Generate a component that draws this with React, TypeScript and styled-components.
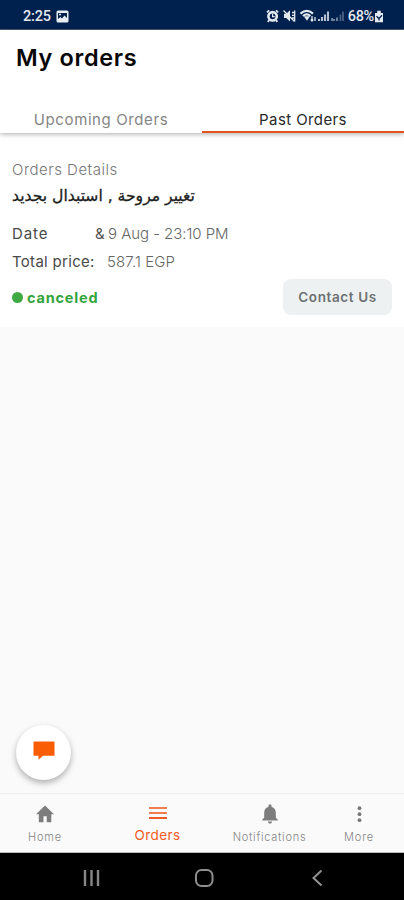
import React from "react";
import styled, { createGlobalStyle } from "styled-components";

const GlobalStyle = createGlobalStyle`
  * { box-sizing: border-box; }
  body { margin: 0; background: #fafafa; font-family: Inter, "Open Sans", sans-serif; }
  button { font: inherit; border: 0; padding: 0; background: none; }
  svg { display: block; flex: none; }
`;

const Screen = styled.div`
  width: 404px;
  height: 900px;
  display: flex;
  flex-direction: column;
  overflow: hidden;
  background: #fafafa;
`;

const StatusBar = styled.div`
  height: 30px;
  flex: none;
  display: flex;
  align-items: center;
  justify-content: space-between;
  padding: 3px 20px 0 23px;
  background: #00204d;
  border-bottom: 1px solid #4c5d7b;
  color: #e4e9f0;
  font-family: Roboto, sans-serif;
  font-size: 14.5px;
`;

const StatusGroup = styled.div`
  display: flex;
  align-items: center;
`;

const Clock = styled.span`
  margin-right: 5px;
  font-weight: 500;
  letter-spacing: -0.15px;
`;

const Percent = styled.span`
  margin-left: 3px;
  font-weight: 500;
  letter-spacing: -0.3px;
`;

const Header = styled.header`
  height: 103px;
  flex: none;
  display: flex;
  flex-direction: column;
  justify-content: space-between;
  background: #fff;
  box-shadow: 0 1px 5px rgba(0, 0, 0, 0.34);
  z-index: 1;
`;

const Title = styled.h1`
  margin: 12px 0 0 16px;
  font-size: 23.5px;
  line-height: 32px;
  font-weight: 600;
  letter-spacing: 0.65px;
  color: #080808;
`;

const Tabs = styled.nav`
  display: grid;
  grid-template-columns: 1fr 1fr;
`;

const Tab = styled.button<{ $active?: boolean }>`
  height: 30px;
  padding-top: 4px;
  border-bottom: 2px solid ${(p) => (p.$active ? "#e4521f" : "transparent")};
  color: ${(p) => (p.$active ? "#292929" : "#858585")};
  font-size: 15px;
  letter-spacing: ${(p) => (p.$active ? "0.4px" : "0.6px")};
`;

const Order = styled.section`
  height: 194px;
  flex: none;
  display: flex;
  flex-direction: column;
  padding: 25px 12px 0;
  background: #fff;
`;

const Caption = styled.div`
  height: 24px;
  line-height: 24px;
  font-size: 15px;
  font-weight: 300;
  letter-spacing: 0.5px;
  color: #777;
`;

const Service = styled.div`
  height: 30px;
  margin-bottom: 8px;
  line-height: 29px;
  font-family: "DejaVu Sans", sans-serif;
  font-size: 15.6px;
  color: #1c1c1c;
  -webkit-text-stroke: 0.3px #1c1c1c;
  white-space: nowrap;
`;

const Row = styled.div`
  height: 28px;
  line-height: 28px;
  display: flex;
  font-size: 15px;
`;

const Label = styled.span<{ $width: number; $spacing: number }>`
  width: ${(p) => p.$width}px;
  letter-spacing: ${(p) => p.$spacing}px;
  color: #494949;
  white-space: nowrap;
`;

const Ampersand = styled.span`
  width: 13px;
  font-size: 15px;
  color: #555;
`;

const Value = styled.span<{ $spacing: number }>`
  letter-spacing: ${(p) => p.$spacing}px;
  font-weight: 300;
  color: #666;
`;

const OrderFooter = styled.div`
  display: flex;
  align-items: center;
  justify-content: space-between;
  margin-top: 3px;
`;

const Status = styled.div`
  display: flex;
  align-items: center;
  gap: 4px;
  font-size: 14.5px;
  font-weight: 700;
  letter-spacing: 0.8px;
  color: #32a43b;
`;

const Dot = styled.span`
  width: 11px;
  height: 11px;
  border-radius: 50%;
  background: #3eaa43;
`;

const ContactButton = styled.button`
  width: 109px;
  height: 36px;
  border-radius: 8px;
  background: #edf1f2;
  color: #6d7173;
  font-size: 13.5px;
  font-weight: 600;
  letter-spacing: 0.6px;
`;

const Content = styled.main`
  flex: 1;
  display: flex;
  align-items: flex-end;
  padding: 0 0 13px 16px;
`;

const ChatButton = styled.button`
  width: 55px;
  height: 55px;
  display: flex;
  align-items: center;
  justify-content: center;
  padding-bottom: 3px;
  border-radius: 50%;
  background: #fff;
  box-shadow: 0 3px 6px rgba(0, 0, 0, 0.3);
`;

const BottomNav = styled.nav`
  height: 60px;
  flex: none;
  display: grid;
  grid-template-columns: 90px 135px 89px 90px;
  border-top: 1px solid #ededed;
  border-bottom: 1px solid #bbb;
  background: #fafafa;
`;

const NavItem = styled.button<{ $active?: boolean; $spacing: number }>`
  display: flex;
  flex-direction: column;
  align-items: center;
  justify-content: flex-start;
  padding-top: ${(p) => (p.$active ? 9 : 10)}px;
  gap: ${(p) => (p.$active ? "3px" : "4px")};
  color: ${(p) => (p.$active ? "#f15a20" : "#858585")};
  font-size: ${(p) => (p.$active ? 13.5 : 11)}px;
  font-weight: ${(p) => (p.$active ? 400 : 300)};
  line-height: 18px;
  letter-spacing: ${(p) => p.$spacing}px;
  white-space: nowrap;
`;

const SystemBar = styled.div`
  height: 47px;
  flex: none;
  display: grid;
  grid-template-columns: repeat(3, 113px);
  align-items: center;
  justify-items: center;
  padding: 3px 0 0 34px;
  background: #000;
`;

const PictureIcon = () => (
  <svg width="13" height="13" viewBox="0 0 13 13">
    <rect x="0.5" y="0.5" width="12" height="12" rx="1.5" fill="#e8edf3" />
    <path d="M2 3h9v5L8.5 5.5 6 8.5 4.5 7 2 9z" fill="#00204d" />
    <circle cx="4" cy="4.5" r="1" fill="#e8edf3" />
  </svg>
);

const StatusIcons = () => (
  <svg width="79" height="14" viewBox="0 0 79 14" fill="none" stroke="#e4e9f0">
    <circle cx="6.6" cy="7.3" r="4.2" strokeWidth="2.6" />
    <path d="M1 3.4 3.2 1.3M10 1.3l2.2 2.1M3.2 11.2l-1.4 1.6M10 11.2l1.4 1.6" strokeWidth="1.8" />
    <path d="M6.6 4.7v3h2.1" strokeWidth="1.2" />
    <path d="M18 4.8h2.2L24 1.3v11.2L20.2 9H18z" fill="#e4e9f0" stroke="none" />
    <path d="m17.5 1.5 11 11M26 3.5h3M26 6.3h3M26 9h3M28.7 1.5v11" strokeWidth="1.3" />
    <path d="M34.5 4.7c4-3.5 8.5-3.5 12.5 0M37 7c2.4-2.1 5-2.1 7.4 0" strokeWidth="2.2" />
    <path d="m37.8 7.3 3.2 4.5 3-4.5z" fill="#e4e9f0" stroke="none" />
    <path d="M46 7v5M44.7 10.5 46 12l1.2-1.5M49 12V8" strokeWidth="1.3" />
    <path d="M53 12v-2M56 12V8M59 12V5.5M62 12V2.5" strokeWidth="2.1" opacity=".8" />
    <path d="M66 9v3M68 12v-2M71 12V8.5" strokeWidth="1.5" opacity=".65" />
    <path d="M74.5 12V5.5M77 12V2.5" strokeWidth="1.8" opacity=".32" />
  </svg>
);

const BatteryIcon = () => (
  <svg width="10" height="13" viewBox="0 0 10 13">
    <path d="M3.2.8h3.6V3H9v9.3H1V3h2.2z" fill="#e4e9f0" />
    <path d="M2.5 6.2 5 8.5l3-3.2M5 8.5v2" stroke="#00204d" strokeWidth="1.3" fill="none" />
  </svg>
);

const ChatIcon = () => (
  <svg width="22" height="20" viewBox="0 0 22 20">
    <path d="M.5.5h21v14.3H10l-4.5 4v-4h-5z" fill="#f95d06" />
  </svg>
);

const HomeIcon = () => (
  <svg width="20" height="20" viewBox="0 0 20 20">
    <path d="M10 1.5 1 10.2h2.8v8h4.7v-6h3.2v6h4.6v-8H19z" fill="#7d7d7d" />
  </svg>
);

const OrdersIcon = () => (
  <svg width="18" height="20" viewBox="0 0 18 20">
    <path d="M0 5h18M0 10h18" stroke="#f07d50" strokeWidth="2" />
    <path d="M0 15h18" stroke="#ee5c26" strokeWidth="2" />
  </svg>
);

const BellIcon = () => (
  <svg width="18" height="20" viewBox="0 0 18 20">
    <path d="M7.5 2.7V1.8a1.5 1.5 0 0 1 3 0v.9c3 .8 4.3 3.2 4.3 5.8v5l2 2.2v.8H1.2v-.8l2-2.2v-5c0-2.6 1.3-5 4.3-5.8ZM7 17.4h4c0 1.4-.8 2.2-2 2.2s-2-.8-2-2.2" fill="#7d7d7d" />
  </svg>
);

const MoreIcon = () => (
  <svg width="8" height="20" viewBox="0 0 8 20" fill="#777">
    <circle cx="4.5" cy="4.2" r="1.9" />
    <circle cx="4.5" cy="10.2" r="1.9" />
    <circle cx="4.5" cy="16.2" r="1.9" />
  </svg>
);

const RecentsIcon = () => (
  <svg width="18" height="18" viewBox="0 0 18 18">
    <path d="M3 1v16M9.5 1v16M16 1v16" stroke="#878787" strokeWidth="2.4" />
  </svg>
);

const CircleIcon = () => (
  <svg width="20" height="18" viewBox="0 0 20 18">
    <rect x="2" y="1" width="16.5" height="16" rx="5.5" fill="none" stroke="#8e8e8e" strokeWidth="2" />
  </svg>
);

const BackIcon = () => (
  <svg width="12" height="18" viewBox="0 0 12 18">
    <path d="M10.5 1.5 2.5 9l8 7.5" fill="none" stroke="#929292" strokeWidth="2" />
  </svg>
);

export default function App() {
  return (
    <>
      <GlobalStyle />
      <Screen>
        <StatusBar>
          <StatusGroup>
            <Clock>2:25</Clock>
            <PictureIcon />
          </StatusGroup>
          <StatusGroup>
            <StatusIcons />
            <Percent>68%</Percent>
            <BatteryIcon />
          </StatusGroup>
        </StatusBar>
        <Header>
          <Title>My orders</Title>
          <Tabs>
            <Tab>Upcoming Orders</Tab>
            <Tab $active>Past Orders</Tab>
          </Tabs>
        </Header>
        <Order>
          <Caption>Orders Details</Caption>
          <Service lang="ar">تغيير مروحة , استبدال بجديد</Service>
          <Row>
            <Label $width={83} $spacing={0.9}>Date</Label>
            <Ampersand>&amp;</Ampersand>
            <Value $spacing={-0.05}>9 Aug - 23:10 PM</Value>
          </Row>
          <Row>
            <Label $width={95} $spacing={0.3}>Total price:</Label>
            <Value $spacing={0.1}>587.1 EGP</Value>
          </Row>
          <OrderFooter>
            <Status>
              <Dot />
              canceled
            </Status>
            <ContactButton>Contact Us</ContactButton>
          </OrderFooter>
        </Order>
        <Content>
          <ChatButton aria-label="Chat">
            <ChatIcon />
          </ChatButton>
        </Content>
        <BottomNav>
          <NavItem $spacing={0.9}>
            <HomeIcon />
            Home
          </NavItem>
          <NavItem $active $spacing={0.4}>
            <OrdersIcon />
            Orders
          </NavItem>
          <NavItem $spacing={0.75}>
            <BellIcon />
            Notifications
          </NavItem>
          <NavItem $spacing={0.8}>
            <MoreIcon />
            More
          </NavItem>
        </BottomNav>
        <SystemBar>
          <RecentsIcon />
          <CircleIcon />
          <BackIcon />
        </SystemBar>
      </Screen>
    </>
  );
}
